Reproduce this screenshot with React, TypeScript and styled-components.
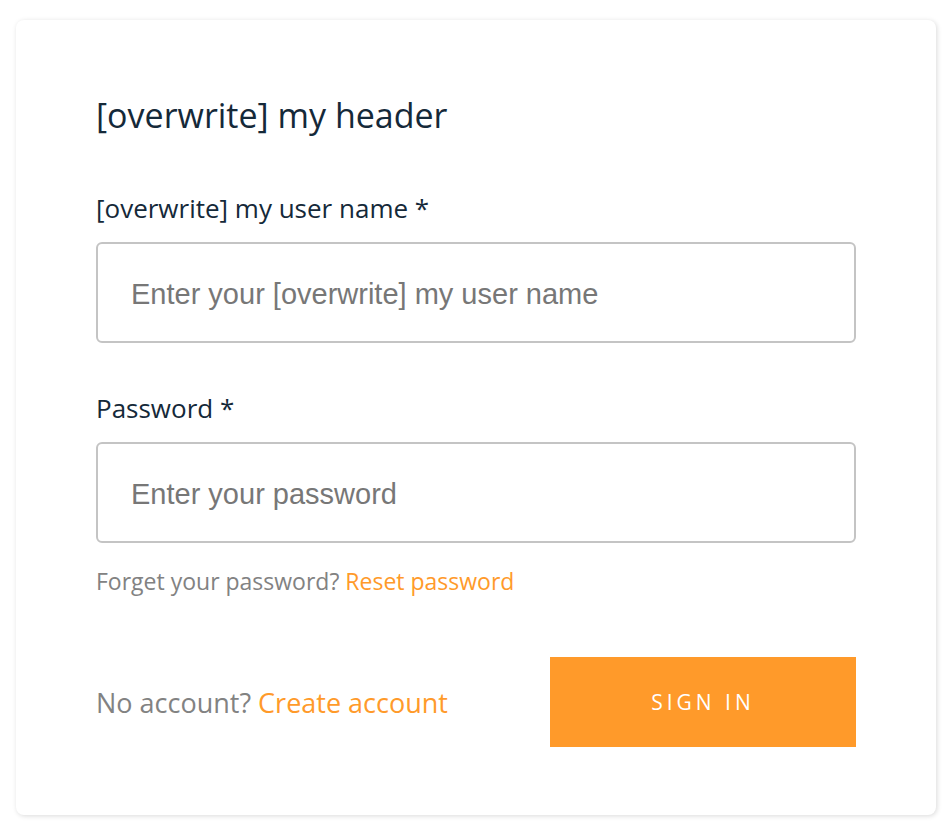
import styled, { createGlobalStyle } from 'styled-components'

const GlobalStyle = createGlobalStyle`
    html, body {
        margin: 0;
        padding: 0;
        background: #ffffff;
    }
    body {
        font-family: "Open Sans", Lato, sans-serif;
    }
`;

export default function App() {
  return (
      <>
          <GlobalStyle />
          <Page>
              <Card>
                  <Header>[overwrite] my header</Header>
                  <Field>
                      <Label>[overwrite] my user name *</Label>
                      <Input placeholder="Enter your [overwrite] my user name" />
                  </Field>
                  <Field>
                      <Label>Password *</Label>
                      <Input type="password" placeholder="Enter your password" />
                  </Field>
                  <Hint>
                      Forget your password? <Link>Reset password</Link>
                  </Hint>
                  <Footer>
                      <FooterText>
                          No account? <Link>Create account</Link>
                      </FooterText>
                      <SignIn>SIGN IN</SignIn>
                  </Footer>
              </Card>
          </Page>
      </>
  )
}

const Page = styled.div`
    padding: 20px 14px 15px 16px;
`

const Card = styled.div`
    box-sizing: border-box;
    width: 920px;
    height: 795px;
    padding: 75px 80px 0 80px;
    background: #ffffff;
    border-radius: 8px;
    box-shadow: 1px 1px 5px rgba(0, 0, 0, 0.15);
`

const Header = styled.h1`
    margin: 0 0 58px;
    font-size: 34px;
    font-weight: 400;
    line-height: 40px;
    color: #152939;
`;

const Field = styled.div`
    margin-bottom: 50px;
`

const Label = styled.div`
    font-size: 26px;
    line-height: 30px;
    color: #152939;
    margin-bottom: 19px;
`

const Input = styled.input`
    display: block;
    box-sizing: border-box;
    width: 100%;
    height: 101px;
    padding: 4px 33px 0;
    border: 2px solid #c4c4c4;
    border-radius: 6px;
    font-family: "Liberation Sans", Arial, sans-serif;
    font-size: 29px;
    color: #152939;
    outline: none;

    &::placeholder {
        color: #777777;
    }
`

const Hint = styled.div`
    margin-top: -27px;
    font-size: 23px;
    line-height: 30px;
    color: #828282;
`

const Link = styled.span`
    color: #ff9a2a;
    cursor: pointer;
`

const Footer = styled.div`
    display: flex;
    justify-content: space-between;
    align-items: center;
    margin-top: 61px;
`

const FooterText = styled.div`
    font-size: 27px;
    color: #828282;
`

const SignIn = styled.button`
    width: 306px;
    height: 90px;
    border: none;
    background: #ff9a2a;
    color: #ffffff;
    font-family: "Open Sans", Lato, sans-serif;
    font-size: 21px;
    letter-spacing: 4px;
    cursor: pointer;
`
